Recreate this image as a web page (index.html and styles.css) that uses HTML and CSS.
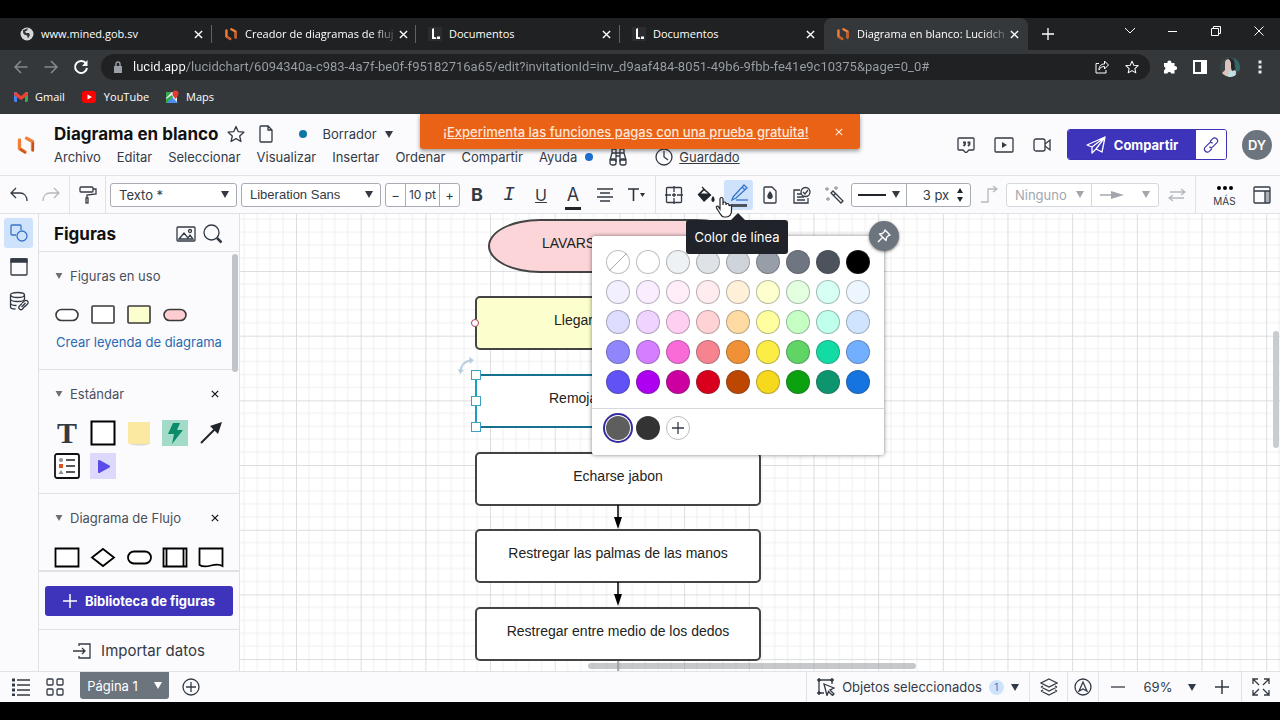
FILE: index.html
```
<!DOCTYPE html>
<html lang="es">

<head>
  <meta charset="UTF-8" />
  <meta name="viewport" content="width=device-width, initial-scale=1.0" />
  <title>Diagrama en blanco: Lucidchart</title>
  <link rel="stylesheet" href="styles.css">
</head>

<body>
  <!-- shared icons -->
  <svg class="sprite" aria-hidden="true">
    <symbol id="i-close" viewBox="0 0 10 10"><path d="M1 1l8 8M9 1l-8 8" fill="none" stroke="currentColor" stroke-width="1.5" /></symbol>
    <symbol id="i-caret" viewBox="0 0 8 7"><path d="M0 0h8L4 7z" fill="currentColor" /></symbol>
    <symbol id="i-logo" viewBox="0 0 20 20">
      <path d="M3.500 5v8.500l5.500 3.500" fill="none" stroke="#f0803a" stroke-width="3.400" stroke-linecap="round" stroke-linejoin="round" />
      <path d="M10.500 3.200l6 3.300v8.500" fill="none" stroke="#f0803a" stroke-width="3.400" stroke-linecap="round" stroke-linejoin="round" />
      <path d="M4.500 14.500l4.500 3M17 8v7.500" fill="none" stroke="#c9501b" stroke-width="2" stroke-linecap="round" />
    </symbol>
    <symbol id="i-doc" viewBox="0 0 14 14"><rect width="14" height="14" fill="#2a2c30" /><path d="M4 2l2-1v9h1.500l1 2H4zM9 9.500h3V12H9z" fill="#fff" /></symbol>
    <symbol id="i-star" viewBox="0 0 18 18"><path d="M9 1.500l2.300 5.200 5.600.500-4.200 3.800 1.200 5.500L9 13.600l-4.900 2.900 1.200-5.500L1.100 7.200l5.600-.5z" fill="none" stroke="currentColor" stroke-width="1.300" stroke-linejoin="round" /></symbol>
    <symbol id="i-plus" viewBox="0 0 14 14"><path d="M7 0v14M0 7h14" stroke="currentColor" stroke-width="1.500" /></symbol>
  </svg>

  <div class="screen">
    <div class="browser">
      <div class="tabs">
        <div class="tab">
          <svg class="tab-icon" viewBox="0 0 14 14"><circle cx="7" cy="7" r="6.500" fill="#d5d7da" /><path d="M3 3c2 0 3-2 5-1.500l-1 2-2 1 1 1.500h3l1 2-2 3.500-1-3-3-1-1-2z" fill="#34363a" /></svg>
          <span class="tab-title">www.mined.gob.sv</span>
          <button class="tab-close" aria-label="Cerrar"><svg><use href="#i-close" /></svg></button>
        </div>
        <div class="tab">
          <svg class="tab-icon"><use href="#i-logo" /></svg>
          <span class="tab-title fade">Creador de diagramas de fluj</span>
          <button class="tab-close" aria-label="Cerrar"><svg><use href="#i-close" /></svg></button>
        </div>
        <div class="tab">
          <svg class="tab-icon"><use href="#i-doc" /></svg>
          <span class="tab-title">Documentos</span>
          <button class="tab-close" aria-label="Cerrar"><svg><use href="#i-close" /></svg></button>
        </div>
        <div class="tab no-line">
          <svg class="tab-icon"><use href="#i-doc" /></svg>
          <span class="tab-title">Documentos</span>
          <button class="tab-close" aria-label="Cerrar"><svg><use href="#i-close" /></svg></button>
        </div>
        <div class="tab active">
          <svg class="tab-icon"><use href="#i-logo" /></svg>
          <span class="tab-title fade">Diagrama en blanco: Lucidch</span>
          <button class="tab-close" aria-label="Cerrar"><svg><use href="#i-close" /></svg></button>
        </div>
        <button class="new-tab" aria-label="Nueva pestaña"><svg width="12" height="12"><use href="#i-plus" /></svg></button>
        <div class="window-buttons">
          <button aria-label="Buscar pestañas"><svg width="12" height="12" viewBox="0 0 12 12"><path d="M1 3l5 5 5-5" /></svg></button>
          <button aria-label="Minimizar"><svg width="12" height="12" viewBox="0 0 12 12"><path d="M1 6.500h9" /></svg></button>
          <button aria-label="Restaurar"><svg width="12" height="12" viewBox="0 0 12 12"><path d="M1.500 3.500h7v7h-7zM3.500 3.500v-2h7v7h-2" /></svg></button>
          <button aria-label="Cerrar ventana"><svg width="12" height="12" viewBox="0 0 12 12"><path d="M1.500 1.500l9 9M10.500 1.500l-9 9" /></svg></button>
        </div>
      </div>

      <div class="nav">
        <button class="nav-btn dim" aria-label="Atrás"><svg width="16" height="16" viewBox="0 0 16 16"><path d="M14.500 8H2M8 2L2 8l6 6" /></svg></button>
        <button class="nav-btn dim" aria-label="Adelante"><svg width="16" height="16" viewBox="0 0 16 16"><path d="M1.500 8H14M8 2l6 6-6 6" /></svg></button>
        <button class="nav-btn" aria-label="Recargar"><svg width="16" height="16" viewBox="0 0 16 16"><path d="M13 4.500A6 6 0 1 0 14 9" stroke-width="2" /><path d="M14.500 1v6H9z" fill="currentColor" stroke="none" /></svg></button>
        <div class="address">
          <svg width="10" height="12" viewBox="0 0 10 12"><path d="M1 5h8v7H1z" fill="#9aa0a6" /><path d="M3 5V3a2 2 0 0 1 4 0v2" fill="none" stroke="#9aa0a6" stroke-width="1.400" /></svg>
          <input type="text" aria-label="Dirección" value="lucid.app/lucidchart/6094340a-c983-4a7f-be0f-f95182716a65/edit?invitationId=inv_d9aaf484-8051-49b6-9fbb-fe41e9c10375&amp;page=0_0#">
          <button aria-label="Compartir página"><svg width="14" height="14" viewBox="0 0 14 14"><path d="M4 3.500H1v9.500h10v-3M4 10c0-4 2-6 5.500-6V1L13.500 5 9.500 9V6.500C7 6.500 5 7.500 4 10z" /></svg></button>
          <button aria-label="Añadir a marcadores"><svg width="14" height="14"><use href="#i-star" /></svg></button>
        </div>
        <div class="nav-right">
          <button aria-label="Extensiones"><svg width="14" height="14" viewBox="0 0 14 14"><path d="M1 3h3.500a2 2 0 1 1 3.800 0H11.500v3.200a2 2 0 1 1 0 3.800V13.500H8.200a2 2 0 0 0-3.800 0H1v-3.300a2 2 0 0 0 0-3.800z" fill="#fff" /></svg></button>
          <button aria-label="Panel lateral"><svg width="14" height="14" viewBox="0 0 14 14"><path d="M1 1h12v12H1z" fill="none" stroke="#fff" stroke-width="2" /><path d="M8 1h5v12H8z" fill="#fff" /></svg></button>
          <button aria-label="Perfil"><svg width="20" height="20" viewBox="0 0 20 20"><clipPath id="face"><circle cx="10" cy="10" r="10" /></clipPath><g clip-path="url(#face)"><path d="M0 0h20v20H0z" fill="#3b4547" /><path d="M14 0h6v14h-4z" fill="#326a68" /><path d="M5 6c0-5 6-5 6 0v5l5 3v6H1c0-6 5-5 4-9z" fill="#dcc4bd" /><path d="M9 14l5-1 1 7H8z" fill="#b6e3ea" /><path d="M8 1c8 0 6 7 7 12l-3 1c-2-4 1-9-4-13z" fill="#20282b" /></g></svg></button>
          <button aria-label="Menú"><svg width="4" height="14" viewBox="0 0 4 14"><path d="M.500.500h3v3h-3zM.500 5.500h3v3h-3zM.500 10.500h3v3h-3z" fill="#e8eaed" /></svg></button>
        </div>
      </div>

      <div class="bookmarks">
        <a href="#"><svg width="14" height="12" viewBox="0 0 14 12"><path d="M0 1h3v10H1l-1-1z" fill="#4285f4" /><path d="M11 1h3v9l-1 1h-2z" fill="#34a853" /><path d="M0 2l2-1 5 4 5-4 2 1v2L7 9 0 4z" fill="#ea4335" /></svg>Gmail</a>
        <a href="#"><svg width="16" height="12" viewBox="0 0 16 12"><rect x="1" width="14" height="12" rx="3" fill="#f00" /><path d="M6.500 3.500v5L11 6z" fill="#fff" /></svg>YouTube</a>
        <a href="#"><svg width="14" height="14" viewBox="0 0 14 14"><path d="M1 2h11v11H1z" fill="#e8eaed" /><path d="M1 2h6L1 8z" fill="#34a853" /><path d="M1 13l6-6 6 6z" fill="#4d8df6" /><path d="M1 9l6-4 1 2-6 6H1z" fill="#34a853" /><path d="M10.500 9C8 6 7.500 5 7.500 3.500a3 3 0 0 1 6 0C13.500 5 13 6 10.500 9z" fill="#e53a30" /></svg>Maps</a>
      </div>
    </div>

    <header class="header">
      <svg class="brand"><use href="#i-logo" /></svg>
      <div class="doc">
        <div class="doc-row">
          <h1>Diagrama en blanco</h1>
          <button aria-label="Favorito"><svg width="18" height="18"><use href="#i-star" /></svg></button>
          <button aria-label="Documento"><svg class="line" width="14" height="18" viewBox="0 0 14 18"><path d="M1 2a1 1 0 0 1 1-1h7l4 4v11a1 1 0 0 1-1 1H2a1 1 0 0 1-1-1zM9 1v4h4" /></svg></button>
          <i class="dot teal"></i>
          <button class="draft">Borrador <svg class="caret"><use href="#i-caret" /></svg></button>
        </div>
        <nav class="menu">
          <button>Archivo</button>
          <button>Editar</button>
          <button>Seleccionar</button>
          <button>Visualizar</button>
          <button>Insertar</button>
          <button>Ordenar</button>
          <button>Compartir</button>
          <button class="help">Ayuda <i class="dot"></i></button>
          <button aria-label="Buscar" class="binoculars"><svg class="line" width="18" height="18" viewBox="0 0 18 18"><path d="M3 5V1h4v4M11 5V1h4v4M3 5L1 12M15 5l2 7M3 5h12M7 5v9M11 5v9M7 8h4M1 12h6M11 12h6" /><rect x="1" y="11" width="6" height="6" rx="2" /><rect x="11" y="11" width="6" height="6" rx="2" /></svg></button>
          <a href="#" class="saved"><svg class="line" width="18" height="18" viewBox="0 0 18 18"><circle cx="9" cy="9" r="8" /><path d="M9 3v6l4 3" /></svg><span>Guardado</span></a>
        </nav>
      </div>
      <div class="actions">
        <button aria-label="Comentarios"><svg class="line" width="18" height="16" viewBox="0 0 18 16"><path d="M2 1h14a1 1 0 0 1 1 1v10a1 1 0 0 1-1 1h-4l-3 3-3-3H2a1 1 0 0 1-1-1V2a1 1 0 0 1 1-1z" /><path d="M6 5.500h2v2L6.500 9M10.500 5.500h2v2L11 9" stroke-width="1.800" /></svg></button>
        <button aria-label="Presentar"><svg class="line" width="20" height="16" viewBox="0 0 20 16"><rect x="1" y="1" width="18" height="14" rx="1" /><path d="M8 5v6l5-3z" fill="currentColor" stroke="none" /></svg></button>
        <button aria-label="Video"><svg class="line" width="18" height="14" viewBox="0 0 18 14"><rect x="1" y="1" width="11" height="12" rx="2" /><path d="M12 6l5-4v10l-5-4" /></svg></button>
        <div class="share">
          <button class="share-main"><svg width="20" height="18" viewBox="0 0 20 18"><path d="M1 9L19 1l-3 15-6-3-4 4v-6zM6 11L19 1l-9 12" fill="none" stroke="#fff" stroke-width="1.300" stroke-linejoin="round" /></svg>Compartir</button>
          <button class="share-link" aria-label="Copiar enlace"><svg width="16" height="16" viewBox="0 0 16 16"><path d="M7 4.500l2.500-2.600a2.600 2.600 0 0 1 4.200 4L10 9.600a2.600 2.600 0 0 1-3.600.1M9 11.500l-2.500 2.600a2.600 2.600 0 0 1-4.200-4L6 6.400a2.600 2.600 0 0 1 3.600-.1" fill="none" stroke="#3f37ad" stroke-width="1.200" /></svg></button>
        </div>
        <button class="avatar">DY</button>
      </div>
      <div class="banner">
        <a href="#">¡Experimenta las funciones pagas con una prueba gratuita!</a>
        <button aria-label="Cerrar aviso"><svg width="8" height="8"><use href="#i-close" /></svg></button>
      </div>
    </header>

    <div class="toolbar">
      <div class="tool-group undo-group">
        <button aria-label="Deshacer"><svg class="line" width="18" height="16" viewBox="0 0 18 16"><path d="M6 1L1 6l5 5M1 6h9c4 0 7 3 7 8" /></svg></button>
        <button class="off" aria-label="Rehacer"><svg class="line" width="18" height="16" viewBox="0 0 18 16"><path d="M12 1l5 5-5 5M17 6H8c-4 0-7 3-7 8" /></svg></button>
      </div>
      <div class="tool-group roller-group">
        <button aria-label="Copiar formato"><svg class="line" width="18" height="18" viewBox="0 0 18 18"><rect x="1" y="1" width="13" height="5" rx="1" /><path d="M14 3h3v5l-9 1v3" /><rect x="7" y="12" width="2" height="5" /></svg></button>
      </div>
      <label class="select style-select"><select aria-label="Estilo de texto"><option>Texto *</option></select><svg class="caret"><use href="#i-caret" /></svg></label>
      <label class="select font-select"><select aria-label="Fuente"><option>Liberation Sans</option></select><svg class="caret"><use href="#i-caret" /></svg></label>
      <div class="stepper">
        <button>−</button>
        <input type="text" aria-label="Tamaño de fuente" value="10 pt">
        <button>+</button>
      </div>
      <div class="tool-row">
        <button class="bold">B</button>
        <button class="italic">I</button>
        <button class="under">U</button>
        <button class="font-color">A</button>
        <button aria-label="Alinear"><svg class="line" width="16" height="14" viewBox="0 0 16 14"><path d="M0 1h16M3 5h10M0 9h16M3 13h10" /></svg></button>
        <button aria-label="Más texto"><svg width="18" height="14" viewBox="0 0 18 14"><path d="M0 1h11M5.500 1v12" fill="none" stroke="#2c323b" stroke-width="1.600" /><path d="M12 5h5l-2.500 4z" fill="#2c323b" /></svg></button>
      </div>
      <div class="tool-row ruled">
        <button aria-label="Contenedor"><svg class="line" width="18" height="18" viewBox="0 0 18 18"><rect x="1.500" y="1.500" width="15" height="15" rx="1" /><path d="M9 0v6M9 12v6M0 9h6M12 9h6M7 9h4M9 7v4" /></svg></button>
        <button aria-label="Relleno"><svg width="18" height="18" viewBox="0 0 18 18"><path d="M1 9l6-6 7 6.500L7 16z" fill="#20252c" /><path d="M1 9l6-6 7 6.500M5 1l3 3" fill="none" stroke="#20252c" stroke-width="1.200" /><path d="M4 7.500l3-3 4 3z" fill="#fff" /><path d="M16 10c3 4 1 6 0 6s-3-2 0-6z" fill="#20252c" /></svg></button>
        <button class="current" aria-label="Color de línea"><svg width="18" height="24" viewBox="0 0 18 24"><path d="M3 14L14 2l3 3L6 15l-4 2zM12 4l3 3" fill="none" stroke="#3775c9" stroke-width="1.300" /><path d="M6 17h12" stroke="#3775c9" stroke-width="1.300" /><path d="M1 21h16v3H1z" fill="#4c535c" /></svg></button>
        <button aria-label="Opacidad"><svg class="line" width="14" height="18" viewBox="0 0 14 18"><path d="M1 2a1 1 0 0 1 1-1h7l4 4v11a1 1 0 0 1-1 1H2a1 1 0 0 1-1-1z" /><path d="M7 5c5 6 2 8 0 8s-5-2 0-8z" fill="currentColor" stroke="none" /></svg></button>
        <button aria-label="Estado"><svg class="line" width="18" height="18" viewBox="0 0 18 18"><path d="M7 4H1v13h14v-5M4 8h4M4 11h7M4 14h8" /><circle cx="12.500" cy="6" r="4.500" /><path d="M10 6l2 2 3-4" /></svg></button>
        <button aria-label="Varita"><svg class="line" width="20" height="18" viewBox="0 0 20 18"><path d="M7 7l2-2 10 10-2 2zM9.500 9.500l2-2" /><path d="M3 1v4M1 3h4M12 0v4M10 2h4M4 11v4M2 13h4" stroke="#9aa0a8" /></svg></button>
      </div>
      <div class="line-group">
        <button aria-label="Estilo de línea"><svg width="28" height="2"><path d="M0 1h28" stroke="#20252c" stroke-width="2" /></svg><svg class="caret"><use href="#i-caret" /></svg></button>
        <input type="text" aria-label="Grosor de línea" value="3 px">
        <svg width="6" height="14" viewBox="0 0 6 14"><path d="M0 5l3-5 3 5zM0 9h6l-3 5z" fill="#20252c" /></svg>
      </div>
      <button class="off elbow" aria-label="Tipo de línea"><svg class="line" width="18" height="18" viewBox="0 0 18 18"><path d="M1 16h7V3h8M13 0l4 3-4 3" /></svg></button>
      <div class="ends-group">
        <label class="select bare"><select aria-label="Inicio de línea" disabled><option>Ninguno</option></select><svg class="caret"><use href="#i-caret" /></svg></label>
        <button aria-label="Fin de línea" disabled><svg width="24" height="10" viewBox="0 0 24 10"><path d="M0 5h12" stroke="#a3a7ad" stroke-width="1.500" /><path d="M11 1l13 4-13 4z" fill="#a3a7ad" /></svg><svg class="caret"><use href="#i-caret" /></svg></button>
      </div>
      <button class="off swap" aria-label="Invertir"><svg class="line" width="18" height="14" viewBox="0 0 18 14"><path d="M2 4h15M13 1l4 3-4 3M16 10H1M5 7l-4 3 4 3" /></svg></button>
      <div class="toolbar-end">
        <button class="more"><svg width="16" height="4" viewBox="0 0 16 4"><circle cx="2" cy="2" r="2" /><circle cx="8" cy="2" r="2" /><circle cx="14" cy="2" r="2" /></svg>MÁS</button>
        <button aria-label="Panel"><svg class="line" width="18" height="18" viewBox="0 0 18 18"><path d="M12 5h5v12h-5z" fill="#a9adb4" stroke="none" /><rect x="1" y="1" width="16" height="16" rx="1" /><path d="M1 5h16M12 5v12" /></svg></button>
      </div>
    </div>

    <main class="workspace">
      <div class="rail">
        <button class="current" aria-label="Figuras"><svg width="18" height="18" viewBox="0 0 18 18"><path d="M6 11H2a1 1 0 0 1-1-1V2a1 1 0 0 1 1-1h8a1 1 0 0 1 1 1v4" fill="none" stroke="#3775c9" stroke-width="1.300" /><circle cx="12" cy="12" r="5" fill="none" stroke="#3775c9" stroke-width="1.300" /></svg></button>
        <button aria-label="Plantillas"><svg class="line" width="18" height="18" viewBox="0 0 18 18"><rect x="1" y="1" width="16" height="16" rx="1" /><path d="M1 1h16v3H1z" fill="currentColor" /></svg></button>
        <button aria-label="Datos"><svg class="line" width="20" height="20" viewBox="0 0 20 20"><ellipse cx="8.500" cy="4" rx="7" ry="2.500" /><path d="M1.500 4v12c0 1.500 3 2 5 2M1.500 8c0 2 5 2.500 7 2.500s7-.5 7-2.500V4M1.500 12c0 1.500 3 2.500 6 2.500" /><path d="M13 12l2.500-2a2 2 0 0 1 3 3l-2.500 2.500M16 15l-2.500 3a2 2 0 0 1-3-3l2.500-2.500M12.500 16l4-4" /></svg></button>
      </div>

      <aside class="panel">
        <div class="panel-head">
          <h2>Figuras</h2>
          <button aria-label="Imágenes"><svg class="line" width="20" height="16" viewBox="0 0 20 16"><rect x="1" y="1" width="18" height="14" rx="1" /><path d="M3 13l5-6 4 5 2-3 3 4z" /><circle cx="14" cy="5" r="1.500" /></svg></button>
          <button aria-label="Buscar figuras"><svg class="line" width="20" height="20" viewBox="0 0 20 20"><circle cx="8.500" cy="8.500" r="7.500" /><path d="M14 14l4.500 4.500" stroke-width="2.500" /></svg></button>
        </div>
        <div class="panel-scroll">
          <section class="in-use">
            <h3><svg class="caret"><use href="#i-caret" /></svg>Figuras en uso</h3>
            <div class="shapes">
              <svg width="26" height="26" viewBox="0 0 26 26"><rect x="2" y="7.500" width="22" height="11" rx="5.500" fill="#fff" stroke="#3a3a3a" stroke-width="1.600" /></svg>
              <svg width="26" height="26" viewBox="0 0 26 26"><rect x="2" y="4" width="22" height="17" rx="1" fill="#fff" stroke="#3a3a3a" stroke-width="1.600" /></svg>
              <svg width="26" height="26" viewBox="0 0 26 26"><rect x="2" y="4" width="22" height="17" rx="1" fill="#fcffcd" stroke="#3a3a3a" stroke-width="1.600" /></svg>
              <svg width="26" height="26" viewBox="0 0 26 26"><rect x="2" y="7.500" width="22" height="11" rx="5.500" fill="#ffccd2" stroke="#3a3a3a" stroke-width="1.600" /></svg>
            </div>
            <a href="#" class="legend">Crear leyenda de diagrama</a>
          </section>
          <section class="standard">
            <h3><svg class="caret"><use href="#i-caret" /></svg>Estándar<button aria-label="Quitar"><svg width="8" height="8"><use href="#i-close" /></svg></button></h3>
            <div class="shapes">
              <span class="letter">T</span>
              <svg width="26" height="26" viewBox="0 0 26 26"><rect x="1.500" y="1.500" width="23" height="23" fill="#fff" stroke="#000" stroke-width="2" /></svg>
              <svg width="26" height="26" viewBox="0 0 26 26"><path d="M3 22h21v2c-7 2-14 2-21 0z" fill="#d9d9d2" /><path d="M2 2h22v20c0 1-1 2-2 2H4c-1 0-2-1-2-2z" fill="#fbe9a2" /></svg>
              <svg width="26" height="26" viewBox="0 0 26 26"><path d="M0 0h26v26H0z" fill="#a2dcc9" /><path d="M11 3h7l-3 7h6L10 24l2-10H6z" fill="#0b8c69" /></svg>
              <svg width="26" height="26" viewBox="0 0 26 26"><path d="M3 23L17 9" stroke="#20252c" stroke-width="2" /><path d="M24 2l-4 12-8-8z" fill="#20252c" /></svg>
              <svg width="26" height="26" viewBox="0 0 26 26"><rect x="1" y="1" width="24" height="24" rx="2" fill="#fff" stroke="#111" stroke-width="1.800" /><circle cx="7" cy="7" r="2" fill="#8a8f96" /><path d="M5 11h4v4H5z" fill="#d9541e" /><path d="M7 17l2.500 4h-5z" fill="#8a8f96" /><path d="M12 7h9M12 13h9M12 19h9" stroke="#222" stroke-width="1.500" /></svg>
              <svg width="26" height="26" viewBox="0 0 26 26"><path d="M0 0h26v26H0z" fill="#dcd9fc" /><path d="M9 8l10 5.500L9 19z" fill="#5b4be8" stroke="#5b4be8" stroke-width="2" stroke-linejoin="round" /></svg>
            </div>
          </section>
          <section class="flow">
            <h3><svg class="caret"><use href="#i-caret" /></svg>Diagrama de Flujo<button aria-label="Quitar"><svg width="8" height="8"><use href="#i-close" /></svg></button></h3>
            <div class="shapes black">
              <svg width="26" height="26" viewBox="0 0 26 26"><path d="M1.500 4.500h23v18h-23z" /></svg>
              <svg width="26" height="26" viewBox="0 0 26 26"><path d="M13 5l11 8.500L13 22 2 13.500z" /></svg>
              <svg width="26" height="26" viewBox="0 0 26 26"><rect x="2" y="7.500" width="23" height="12" rx="6" /></svg>
              <svg width="26" height="26" viewBox="0 0 26 26"><path d="M1.500 4.500h23v18h-23zM4.500 4.500v18M21.500 4.500v18" /></svg>
              <svg width="26" height="26" viewBox="0 0 26 26"><path d="M1.500 4.500h23v17.500c-8-5-15 4-23-1z" /></svg>
            </div>
          </section>
          <i class="scroll-thumb"></i>
        </div>
        <div class="library">
          <button><svg width="14" height="14"><use href="#i-plus" /></svg>Biblioteca de figuras</button>
        </div>
        <button class="import"><svg class="line" width="18" height="16" viewBox="0 0 18 16"><path d="M6 3V1h11v14H6v-2M0 8h12M9 5l3 3-3 3" /></svg>Importar datos</button>
      </aside>

      <div class="canvas">
        <svg class="grid" width="100%" height="100%">
          <defs>
            <pattern id="cells" width="100" height="100" patternUnits="userSpaceOnUse" patternTransform="translate(56 57) scale(.6468)">
              <path d="M20 0v100M40 0v100M60 0v100M80 0v100M0 20h100M0 40h100M0 60h100M0 80h100" fill="none" stroke="#eeefef" stroke-width="1.500" />
              <path d="M.75 0v100M0 .75h100" stroke="#dadcde" stroke-width="1.500" />
            </pattern>
          </defs>
          <rect width="100%" height="100%" fill="url(#cells)" />
        </svg>

        <div class="node start">LAVARSE</div>
        <div class="node arrive">Llegar</div>
        <div class="node wet">Remojar</div>
        <div class="node soap">Echarse jabon</div>
        <div class="node palms">Restregar las palmas de las manos</div>
        <div class="node fingers">Restregar entre medio de los dedos</div>

        <svg class="arrow after-soap" width="10" height="24" viewBox="0 0 10 24"><path d="M5 0v14" stroke="#000" stroke-width="1.500" /><path d="M1 12h8L5 24z" /></svg>
        <svg class="arrow after-palms" width="10" height="24" viewBox="0 0 10 24"><path d="M5 0v14" stroke="#000" stroke-width="1.500" /><path d="M1 12h8L5 24z" /></svg>
        <svg class="arrow after-fingers" width="10" height="24" viewBox="0 0 10 24"><path d="M5 0v24" stroke="#000" stroke-width="1.500" /></svg>

        <i class="port"></i>
        <i class="edge"></i>
        <i class="handle top"></i>
        <i class="handle middle"></i>
        <i class="handle bottom"></i>
        <svg class="rotate" width="16" height="18" viewBox="0 0 16 18"><path d="M2.500 15C3 8 7 4 13 3.500" fill="none" stroke="#b9cfe0" stroke-width="2" /><path d="M11 0l5 3-4 4zM0 12l2 5 4-4z" fill="#b9cfe0" /></svg>

        <i class="scroll-x"></i>
        <i class="scroll-y"></i>

        <div class="picker">
          <div class="swatches" id="swatches"></div>
          <div class="recent">
            <button class="swatch chosen" aria-label="Gris"></button>
            <button class="swatch charcoal" aria-label="Carbón"></button>
            <button class="swatch add" aria-label="Añadir color"><svg width="12" height="12"><use href="#i-plus" /></svg></button>
          </div>
          <button class="pin" aria-label="Fijar"><svg width="14" height="14" viewBox="0 0 14 14"><path d="M8 1l5 5-1.500.500-2 2L9 11.500 2.500 5l3-.500 2-2zM5.500 8.500L1 13" fill="none" stroke="#fff" stroke-width="1.400" stroke-linejoin="round" /></svg></button>
        </div>
        <div class="tooltip" role="tooltip">Color de línea</div>
        <svg class="pointer" width="18" height="22" viewBox="0 0 18 22"><path d="M5 13V3a1.500 1.500 0 0 1 3 0v6-1.500a1.500 1.500 0 0 1 3 0V9a1.500 1.500 0 0 1 3 0v1a1.300 1.300 0 0 1 2.500 0v5c0 3-2 6-5 6H9c-2 0-3-2-4-3.500L1.500 12c-.8-1.500 1-2.500 2-1.200z" fill="#fff" stroke="#222" stroke-width="1.200" /></svg>
      </div>
    </main>

    <footer class="footer">
      <button class="foot-list" aria-label="Lista"><svg class="line" width="18" height="18" viewBox="0 0 18 18"><path d="M5 2h13M5 7h13M5 12h13M5 17h13" /><path d="M0 2h3M0 7h3M0 12h3M0 17h3" stroke-width="3" /></svg></button>
      <button class="foot-grid" aria-label="Cuadrícula"><svg class="line" width="18" height="18" viewBox="0 0 18 18"><rect x="1" y="1" width="6" height="6" rx="1" /><rect x="11" y="1" width="6" height="6" rx="1" /><rect x="1" y="11" width="6" height="6" rx="1" /><rect x="11" y="11" width="6" height="6" rx="1" /></svg></button>
      <button class="page-tab">Página 1 <svg class="caret"><use href="#i-caret" /></svg></button>
      <button class="foot-add" aria-label="Añadir página"><svg class="line" width="18" height="18" viewBox="0 0 18 18"><circle cx="9" cy="9" r="8" /><path d="M9 4v10M4 9h10" /></svg></button>
      <div class="foot-right">
        <button class="selection"><svg class="line" width="18" height="18" viewBox="0 0 18 18"><path d="M7 15H2V2h13v4" /><path d="M0 2h4M2 0v4M13 2h4M15 0v4M0 15h4M2 13v4" stroke-width="1.500" /><path d="M7 6l10 4-4 2 4 4-1.500 1.500-4-4-1.500 4z" /></svg>Objetos seleccionados<span class="count">1</span><svg class="caret"><use href="#i-caret" /></svg></button>
        <button class="layers" aria-label="Capas"><svg class="line" width="18" height="18" viewBox="0 0 18 18"><path d="M9 1l8 4-8 4-8-4zM1 9l8 4 8-4M1 13l8 4 8-4M1 9l2-1M17 9l-2-1M1 13l2-1M17 13l-2-1" /></svg></button>
        <button class="access" aria-label="Accesibilidad"><svg class="line" width="18" height="18" viewBox="0 0 18 18"><circle cx="9" cy="9" r="8" /><path d="M5 13l4-9 4 9-4-2z" /></svg></button>
        <div class="zoom">
          <button aria-label="Alejar"><svg class="line" width="14" height="14" viewBox="0 0 14 14"><path d="M0 7h14" /></svg></button>
          <button class="percent">69% <svg class="caret"><use href="#i-caret" /></svg></button>
          <button aria-label="Acercar"><svg width="14" height="14"><use href="#i-plus" /></svg></button>
        </div>
        <button class="full" aria-label="Pantalla completa"><svg class="line" width="18" height="18" viewBox="0 0 18 18"><path d="M7 7L1 1v5M1 1h5M11 7l6-6v5M17 1h-5M7 11l-6 6v-5M1 17h5M11 11l6 6v-5M17 17h-5" /></svg></button>
      </div>
    </footer>
  </div>

  <script>
    var palette = [
      ["none", "#ffffff", "#eff2f4", "#dfe3e7", "#cfd4da", "#979ea8", "#6f7681", "#4c535d", "#000000"],
      ["#f2f0ff", "#f9edff", "#ffedf8", "#ffecee", "#fff1d8", "#fdffcd", "#e3ffe0", "#d7fff3", "#edf6ff"],
      ["#dedcff", "#f0d4ff", "#ffcff2", "#ffd2d5", "#fddba3", "#ffff9f", "#c5ffc4", "#bfffec", "#d0e4ff"],
      ["#8f86fb", "#d57eff", "#f86bd9", "#f58490", "#f09137", "#fcec46", "#60d464", "#12dba4", "#72b0ff"],
      ["#6152f5", "#ad00f0", "#cc00a1", "#d8001c", "#bd4700", "#f6d81c", "#0ca10f", "#0d9570", "#1574e0"]
    ];
    var box = document.getElementById("swatches");
    palette.forEach(function (row) {
      row.forEach(function (color) {
        var b = document.createElement("button");
        b.className = "swatch";
        b.setAttribute("aria-label", color);
        if (color === "none") b.classList.add("none");
        else b.style.backgroundColor = color;
        box.appendChild(b);
      });
    });
  </script>
</body>

</html>
```
FILE: styles.css
```
* {
  box-sizing: border-box;
}

body {
  margin: 0;
  background: #000;
  color: #333a44;
  font: 13px/18px Inter, sans-serif;
}

button, input, select {
  margin: 0;
  padding: 0;
  border: 0;
  background: none;
  color: inherit;
  font: inherit;
}

button {
  display: flex;
  align-items: center;
  justify-content: center;
  flex: none;
}

a {
  color: inherit;
}

svg {
  flex: none;
}

h1, h2, h3 {
  margin: 0;
}

.sprite {
  position: absolute;
  width: 0;
  height: 0;
}

.line {
  fill: none;
  stroke: currentColor;
  stroke-width: 1.3;
}

.caret {
  width: 8px;
  height: 7px;
}

.screen {
  display: flex;
  flex-direction: column;
  height: 100vh;
  padding: 18px 0;
}

/* browser */
.browser {
  flex: none;
  background: #35383b;
  color: #fff;
  font: 11px/16px "Open Sans", sans-serif;
}

.tabs {
  display: flex;
  height: 32px;
  padding-left: 8px;
  background: #1f2123;
}

.tab {
  position: relative;
  display: flex;
  align-items: center;
  flex: 0 1 204px;
  min-width: 0;
  padding: 0 4px 0 12px;
}

.tab:not(.active):not(.no-line):after {
  content: "";
  position: absolute;
  right: 0;
  top: 7px;
  width: 1px;
  height: 18px;
  background: #5f6368;
}

.tab.active {
  border-radius: 8px 8px 0 0;
  background: #35383b;
}

.tab-icon {
  width: 14px;
  height: 14px;
  margin-right: 7px;
}

.tab-title {
  flex: 1;
  white-space: nowrap;
}

.fade {
  mask-image: linear-gradient(to right, #000 85%, rgba(0, 0, 0, .2));
}

.tab-close {
  width: 20px;
  height: 20px;
}

.tab-close svg {
  width: 9px;
  height: 9px;
}

.new-tab {
  width: 40px;
}

.window-buttons {
  display: flex;
  margin-left: auto;
}

.window-buttons button {
  width: 43px;
  padding-bottom: 6px;
}

.window-buttons svg, .nav-btn svg, .address button svg {
  fill: none;
  stroke: currentColor;
}

.nav {
  display: flex;
  align-items: center;
  height: 33px;
  padding-left: 6px;
}

.nav-btn {
  width: 30px;
}

.nav-btn svg {
  stroke-width: 1.5;
}

.dim {
  color: #85898e;
}

.address {
  display: flex;
  align-items: center;
  flex: 1;
  height: 26px;
  margin-left: 5px;
  padding: 0 3px 0 12px;
  border-radius: 13px;
  background: #1f2123;
}

/* the host part of the address is brighter than the path */
.address input {
  flex: 1;
  min-width: 0;
  margin-left: 10px;
  background: linear-gradient(to right, #fff 52px, #9aa0a6 0);
  -webkit-background-clip: text;
  background-clip: text;
  color: transparent;
  font: 13px/18px Roboto, sans-serif;
}

.address button {
  width: 30px;
}

.nav-right {
  display: flex;
  align-items: center;
  padding: 0 5px;
}

.nav-right button {
  width: 30px;
}

.bookmarks {
  display: flex;
  align-items: center;
  gap: 16px;
  height: 31px;
  padding: 0 14px 3px;
}

.bookmarks a {
  display: flex;
  align-items: center;
  gap: 7px;
  text-decoration: none;
}

/* document header */
.header {
  position: relative;
  display: flex;
  align-items: center;
  flex: none;
  height: 61px;
  padding: 0 8px 0 16px;
  background: #fbfbfe;
}

.brand {
  width: 20px;
  height: 20px;
  margin-right: 18px;
}

.doc {
  flex: 1;
}

.doc-row {
  display: flex;
  align-items: center;
  height: 24px;
}

.doc-row h1 {
  margin-right: 9px;
  color: #111;
  font-size: 17px;
  line-height: 24px;
  white-space: nowrap;
}

.doc-row button + button {
  margin-left: 14px;
}

.dot {
  width: 8px;
  height: 8px;
  border-radius: 50%;
  background: #1a6fd0;
}

.dot.teal {
  margin: 0 15px 0 26px;
  background: #0f76a8;
}

.draft, .help {
  gap: 8px;
}

.menu {
  display: flex;
  align-items: center;
  gap: 16px;
  height: 21px;
}

.saved {
  display: flex;
  align-items: center;
  gap: 6px;
  margin-left: 12px;
}

.actions {
  display: flex;
  align-items: center;
}

.actions > button {
  width: 38px;
}

.share {
  display: flex;
  height: 31px;
  margin: 0 15px 0 6px;
  border: 1px solid #3a31b4;
  border-radius: 3px;
  overflow: hidden;
}

.share-main {
  width: 128px;
  gap: 8px;
  background: #3d34bb;
  color: #fff;
  font-weight: 700;
}

.share-link {
  width: 30px;
  background: #fff;
}

.actions > .avatar {
  width: 30px;
  height: 30px;
  border-radius: 50%;
  background: #6c747e;
  color: #fff;
  font-weight: 600;
}

.banner {
  position: absolute;
  top: 0;
  left: 0;
  right: 0;
  display: flex;
  align-items: center;
  justify-content: space-between;
  width: 440px;
  height: 35px;
  margin: 0 auto;
  padding: 0 17px 0 23px;
  border-radius: 0 0 3px 3px;
  background: #ea6215;
  box-shadow: 0 2px 4px rgba(0, 0, 0, .4);
  color: #ffe6d6;
  font-weight: 500;
}

/* toolbar */
.toolbar {
  display: flex;
  align-items: center;
  flex: none;
  height: 39px;
  border-top: 1px solid #e0e3e8;
  border-bottom: 1px solid #dfe3e8;
  background: #fbfbfe;
}

.toolbar button {
  height: 30px;
}

.tool-group {
  display: flex;
  align-items: center;
  align-self: stretch;
  border-right: 1px solid #dfe3e8;
}

.undo-group {
  gap: 14px;
  width: 70px;
  padding-left: 10px;
}

.roller-group {
  justify-content: center;
  width: 36px;
  margin-right: 4px;
}

.off {
  color: #b4b8bd;
}

.select {
  display: flex;
  align-items: center;
  height: 24px;
  margin-right: 4px;
  padding: 0 7px 0 8px;
  border: 1px solid #a8adb5;
  border-radius: 3px;
  background: #fff;
}

.select select {
  flex: 1;
  min-width: 0;
  appearance: none;
  opacity: 1;
}

.style-select {
  width: 127px;
}

.font-select {
  width: 140px;
  font-family: "Liberation Sans", sans-serif;
}

.stepper {
  display: flex;
  height: 24px;
  width: 75px;
  border: 1px solid #a8adb5;
  border-radius: 3px;
  background: #fff;
}

.stepper button {
  width: 19px;
  height: 22px;
}

.stepper input {
  flex: 1;
  min-width: 0;
  border: solid #a8adb5;
  border-width: 0 1px;
  font-size: 12px;
  text-align: center;
}

/* selects and stepper must keep their width beside the tools */
.style-select, .font-select, .stepper, .tool-group {
  flex: none;
}

.tool-row {
  display: flex;
  align-items: center;
  align-self: stretch;
}

.tool-row button {
  width: 32px;
}

.tool-row:not(.ruled) {
  padding: 0 2px 0 1px;
}

.ruled {
  padding-left: 2px;
  border-left: 1px solid #dfe3e8;
}

.bold {
  font-size: 18px;
  font-weight: 700;
}

.italic {
  font: italic 20px "Liberation Mono", monospace;
}

.under {
  font-size: 16px;
  text-decoration: underline;
}

.font-color {
  position: relative;
  font-size: 18px;
}

.font-color:after {
  content: "";
  position: absolute;
  left: 8px;
  right: 8px;
  bottom: 0;
  height: 3px;
  background: #20252c;
}

.toolbar .current, .rail .current {
  width: 29px;
  border-radius: 3px;
  background: #cfe2fb;
}

.toolbar .current {
  margin: 0 1px 0 2px;
}

.line-group, .ends-group {
  display: flex;
  align-items: center;
  flex: none;
  height: 24px;
  border: 1px solid #a8adb5;
  border-radius: 3px;
  background: #fff;
}

.line-group {
  width: 120px;
  margin-left: 1px;
  padding-right: 7px;
}

.line-group button {
  width: 55px;
  height: 22px;
  gap: 6px;
  border-right: 1px solid #a8adb5;
}

.line-group input {
  flex: 1;
  min-width: 0;
  padding-left: 8px;
  text-align: center;
}

.elbow, .swap {
  width: 35px;
}

.ends-group {
  width: 153px;
  border-color: #d5d8dc;
  color: #a3a7ad;
}

.bare {
  flex: 1;
  margin: 0;
  border: 0;
  background: none;
}

.ends-group button {
  width: 67px;
  height: 22px;
  gap: 18px;
  border-left: 1px solid #d5d8dc;
}

.toolbar-end {
  display: flex;
  align-items: center;
  align-self: stretch;
  margin-left: auto;
  padding-right: 9px;
  border-left: 1px solid #dfe3e8;
}

.toolbar-end .more {
  flex-direction: column;
  gap: 4px;
  width: 57px;
  padding-top: 4px;
  font-size: 10px;
  line-height: 14px;
}

/* workspace */
.workspace {
  display: flex;
  flex: 1;
  min-height: 0;
  background: #fbfbfe;
}

.rail {
  display: flex;
  flex-direction: column;
  align-items: center;
  gap: 4px;
  flex: none;
  width: 38px;
  padding: 4px 1px 0 0;
}

.rail button {
  width: 29px;
  height: 30px;
}

.panel {
  display: flex;
  flex-direction: column;
  flex: none;
  width: 202px;
  border: solid #dfe3e8;
  border-width: 0 1px;
}

.panel-head {
  display: flex;
  align-items: center;
  gap: 7px;
  height: 38px;
  padding: 2px 16px 0 15px;
  border-bottom: 1px solid #dfe3e8;
}

.panel-head h2 {
  flex: 1;
  color: #111;
  font-size: 17px;
}

.panel-scroll {
  position: relative;
  flex: 1;
  min-height: 0;
  overflow: hidden;
}

.panel-scroll section {
  padding: 15px 8px 0 10px;
  border-bottom: 1px solid #dfe3e8;
}

.in-use {
  height: 118px;
}

.standard {
  height: 124px;
}

.panel h3 {
  display: flex;
  align-items: center;
  gap: 7px;
  height: 18px;
  padding-left: 6px;
  color: #4a5059;
  font-size: 13px;
  font-weight: 400;
}

.panel h3 .caret {
  height: 6px;
  color: #6a6f77;
}

.panel h3 button {
  margin-left: auto;
  padding-right: 12px;
  color: #111;
}

.shapes {
  display: grid;
  grid-template-columns: repeat(5, 36px);
  row-gap: 7px;
  justify-items: center;
  padding-top: 17px;
}

.black svg {
  fill: #fff;
  stroke: #000;
  stroke-width: 1.8;
}

.letter {
  font: 700 30px/26px "Liberation Serif", serif;
}

.legend {
  display: block;
  padding: 5px 0 0 7px;
  color: #2a6ab0;
  text-decoration: none;
  white-space: nowrap;
}

.scroll-thumb {
  position: absolute;
  top: 2px;
  right: 1px;
  width: 6px;
  height: 118px;
  border-radius: 3px;
  background: #c0c3c8;
}

.library {
  padding: 14px 6px 13px;
  border: solid #dfe3e8;
  border-width: 1px 0;
}

.library button {
  width: 100%;
  height: 30px;
  gap: 8px;
  border-radius: 3px;
  background: #3d34bb;
  color: #fff;
  font-weight: 700;
}

.import {
  height: 41px;
  gap: 10px;
  font-size: 15px;
}

/* canvas */
.canvas {
  position: relative;
  flex: 1;
  min-width: 0;
  background: #fff;
}

.grid {
  display: block;
  position: absolute;
}

.node {
  position: absolute;
  left: 235px;
  display: flex;
  align-items: center;
  justify-content: center;
  width: 286px;
  height: 54px;
  padding-bottom: 6px;
  border: 2px solid #444;
  border-radius: 5px;
  background: #fff;
  color: #222;
  font: 14px/20px "Liberation Sans", sans-serif;
}

.start {
  top: 5px;
  left: 248px;
  width: 260px;
  justify-content: flex-start;
  padding-left: 52px;
  border-radius: 52px / 27px;
  background: #fcd5d9;
}

.arrive {
  top: 82px;
  justify-content: flex-start;
  padding-left: 77px;
  background: #fcffcd;
}

.wet {
  top: 160px;
  justify-content: flex-start;
  padding-left: 72px;
  border-color: #16708f;
}

.soap {
  top: 238px;
}

.palms {
  top: 315px;
}

.fingers {
  top: 393px;
}

.arrow {
  position: absolute;
  left: 373px;
}

.after-soap {
  top: 291px;
}

.after-palms {
  top: 368px;
}

.after-fingers {
  top: 447px;
  height: 10px;
}

.port {
  position: absolute;
  top: 105px;
  left: 231px;
  width: 8px;
  height: 8px;
  border: 1px solid #b04060;
  border-radius: 50%;
  background: #fff;
}

.edge {
  position: absolute;
  top: 160px;
  left: 235px;
  width: 2px;
  height: 54px;
  background: #1f9cc4;
}

.handle {
  position: absolute;
  left: 231px;
  width: 10px;
  height: 10px;
  border: 1px solid #3ca1c4;
  background: #fff;
}

.top {
  top: 156px;
}

.middle {
  top: 182px;
}

.bottom {
  top: 208px;
}

.rotate {
  position: absolute;
  top: 143px;
  left: 218px;
}

.scroll-x {
  position: absolute;
  bottom: 2px;
  left: 348px;
  width: 328px;
  height: 6px;
  border-radius: 3px;
  background: rgba(150, 156, 163, .55);
}

.scroll-y {
  position: absolute;
  top: 117px;
  right: 1px;
  width: 6px;
  height: 117px;
  border-radius: 3px;
  background: #c8cbcf;
}

.picker {
  position: absolute;
  top: 22px;
  left: 352px;
  width: 292px;
  border-radius: 3px;
  background: #fff;
  box-shadow: 0 0 4px rgba(0, 0, 0, .5);
}

.swatches {
  display: grid;
  grid-template-columns: repeat(9, 24px);
  gap: 6px;
  padding: 14px 14px 14px;
  border-bottom: 1px solid #d5d8dc;
}

.swatch {
  width: 24px;
  height: 24px;
  border: 1px solid rgba(60, 65, 72, .35);
  border-radius: 50%;
}

.none {
  background: linear-gradient(135deg, #fff 48%, #aaa 48%, #aaa 52%, #fff 52%);
}

.recent {
  display: flex;
  gap: 6px;
  padding: 7px 14px 15px;
}

.chosen {
  border: 0;
  background: #5e5e5e;
  box-shadow: 0 0 0 1px #fff, 0 0 0 3px #352c9e;
}

.charcoal {
  background: #333;
}

.pin {
  position: absolute;
  top: -15px;
  right: -15px;
  width: 30px;
  height: 30px;
  border-radius: 50%;
  background: #6c747e;
  box-shadow: 0 1px 3px rgba(0, 0, 0, .5);
}

.tooltip {
  position: absolute;
  top: 6px;
  left: 446px;
  width: 102px;
  height: 34px;
  border-radius: 3px;
  background: #20242a;
  color: #fff;
  line-height: 34px;
  text-align: center;
  white-space: nowrap;
}

.tooltip:before {
  content: "";
  position: absolute;
  top: -7px;
  left: 45px;
  border: solid transparent;
  border-width: 0 7px 7px;
  border-bottom-color: #20242a;
}

.pointer {
  position: absolute;
  top: -18px;
  left: 475px;
}

/* footer */
.footer {
  display: flex;
  align-items: center;
  flex: none;
  height: 31px;
  padding-left: 4px;
  border-top: 1px solid #dfe3e8;
  background: #fbfbfe;
}

.footer > button {
  width: 34px;
}

.footer > .page-tab {
  align-self: flex-start;
  gap: 16px;
  width: 89px;
  height: 27px;
  margin: 0 5px 0 8px;
  border-radius: 0 0 3px 3px;
  background: #6c747e;
  color: #fff;
}

.foot-right {
  display: flex;
  align-self: stretch;
  margin-left: auto;
}

.foot-right > * {
  display: flex;
  align-items: center;
  border-left: 1px solid #dfe3e8;
}

.selection {
  width: 223px;
  gap: 7px;
}

.count {
  width: 15px;
  height: 15px;
  border-radius: 50%;
  background: #cfe2fb;
  color: #3775c9;
  font-size: 10px;
  line-height: 15px;
}

.layers {
  width: 38px;
}

.access {
  width: 31px;
}

.zoom {
  width: 143px;
}

.zoom button {
  width: 38px;
}

.zoom .percent {
  gap: 16px;
  flex: 1;
}

.full {
  width: 39px;
}
```
